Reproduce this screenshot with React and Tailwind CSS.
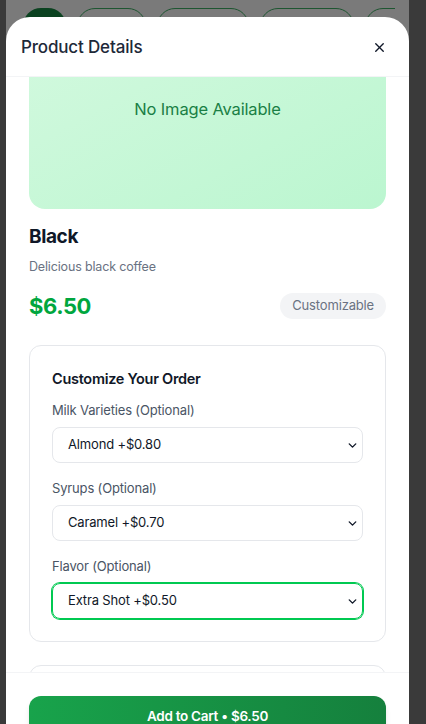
import { ChevronDown, X } from 'lucide-react';

const OPTIONS = [
  { label: 'Milk Varieties (Optional)', value: 'Almond +$0.80' },
  { label: 'Syrups (Optional)', value: 'Caramel +$0.70' },
  { label: 'Flavor (Optional)', value: 'Extra Shot +$0.50', focused: true },
];

const PILLS = [
  { w: 'w-[43px]', filled: true },
  { w: 'w-[69px]' },
  { w: 'w-[92px]' },
  { w: 'w-[94px]' },
  { w: 'w-[60px]' },
];

export default function App() {
  return (
    <div
      className="relative flex h-[724px] w-[426px] overflow-hidden bg-[#3a3a3a] tracking-[-0.01em]"
      style={{ fontFamily: 'Inter, "Noto Sans", sans-serif' }}
    >
      {/* page behind the overlay */}
      <div className="ml-[6px] h-full w-[403px] bg-[#7a7a7a]">
        <div className="flex w-[389px] gap-[11px] overflow-hidden pl-[17px] pt-[8px]">
          {PILLS.map((p, i) => (
            <div
              key={i}
              className={`h-[36px] shrink-0 rounded-full ${p.w} ${
                p.filled ? 'bg-[#0b4220]' : 'border border-[#1e5631]'
              }`}
            />
          ))}
        </div>
      </div>

      {/* modal sheet */}
      <div className="absolute bottom-0 left-[6px] top-[17px] flex w-[403px] flex-col overflow-hidden rounded-t-[24px] bg-white">
        <div className="flex h-[60px] shrink-0 items-center justify-between border-b border-gray-100 pl-[15px] pr-[22px] pt-[2px]">
          <h2 className="text-[17px] font-medium text-gray-800">Product Details</h2>
          <button className="text-gray-900">
            <X size={15} strokeWidth={2.2} />
          </button>
        </div>

        <div className="flex-1 overflow-hidden">
          <div className="-mt-[60px] px-[23px]">
            <div className="flex h-48 items-center justify-center rounded-2xl bg-gradient-to-br from-[#d3f9df] to-[#bbf6d0] pb-2">
              <span className="text-[16.5px] text-[#1a7f45]">No Image Available</span>
            </div>

            <h3 className="mt-[14px] text-[19px] font-bold leading-7 tracking-[-0.02em] text-gray-900">Black</h3>
            <p className="mt-[6px] text-[12.5px] leading-5 text-gray-500">Delicious black coffee</p>

            <div className="mt-[13px] flex items-center justify-between">
              <span className="text-[22px] font-bold leading-8 tracking-[-0.02em] text-green-600">$6.50</span>
              <span className="rounded-full bg-gray-100 px-3 py-[3px] text-[13px] text-gray-500">
                Customizable
              </span>
            </div>

            <div className="mt-[23px] rounded-xl border border-gray-200 px-[22px] pb-[22px] pt-[21px]">
              <h4 className="text-[14.5px] font-semibold leading-6 tracking-[-0.02em] text-gray-900">
                Customize Your Order
              </h4>
              <div className="mt-[9px] flex flex-col gap-[15px]">
                {OPTIONS.map((o) => (
                  <div key={o.label}>
                    <label className="block text-[13px] leading-5 text-gray-600">{o.label}</label>
                    <div
                      className={`relative mt-[7px] flex h-[36px] items-center rounded-lg border pl-[15px] text-[13px] text-gray-900 ${
                        o.focused ? 'border-green-500 ring-1 ring-green-500' : 'border-gray-200'
                      }`}
                    >
                      {o.value}
                      <ChevronDown size={13} strokeWidth={2.6} className="absolute right-[3px] top-[11px]" />
                    </div>
                  </div>
                ))}
              </div>
            </div>

            <div className="mt-[23px] h-[80px] rounded-xl border border-gray-200" />
          </div>
        </div>

        <div className="h-[52px] shrink-0 overflow-hidden border-t border-gray-100 bg-white px-[23px] pt-[23px]">
          <button className="h-[40px] w-full rounded-xl bg-gradient-to-r from-[#18a34b] to-[#15803d] text-[13.5px] font-semibold tracking-[-0.02em] text-white shadow-md">
            Add to Cart • $6.50
          </button>
        </div>
      </div>
    </div>
  );
}
